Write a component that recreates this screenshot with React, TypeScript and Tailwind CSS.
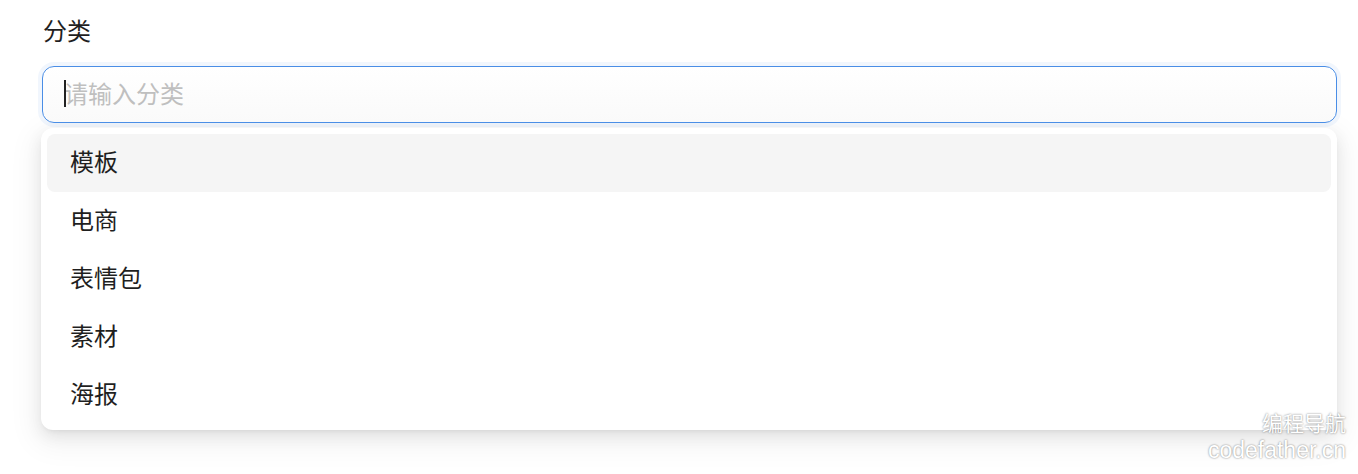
const items = ["模板", "电商", "表情包", "素材", "海报"];

export default function App() {
  return (
    <div className="relative w-[1358px] h-[474px] overflow-hidden bg-white font-['Noto_Sans_CJK_SC','Noto_Sans',sans-serif] text-[#1f1f1f]">
      <div className="flex flex-col pl-[41px] pr-[21px] pt-[14px]">
        {/* label */}
        <label className="pl-[2px] text-[24px] leading-[32px]">分类</label>
        {/* input */}
        <div className="relative mt-[20px] ml-[1px] h-[57px] rounded-[12px] border border-[#4a8ee6] bg-gradient-to-b from-white to-[#fafafa] shadow-[0_0_0_4px_rgba(74,142,230,0.08)]">
          <input
            type="text"
            placeholder="请输入分类"
            className="h-full w-full bg-transparent pb-[4px] pl-[21px] text-[24px] outline-none placeholder:text-[#bfbfbf]"
          />
          <span className="absolute left-[21px] top-[13px] h-[27px] w-[2px] bg-[#222]"></span>
        </div>
        {/* dropdown */}
        <div className="mt-[5px] flex flex-col rounded-[12px] bg-white p-[6px] shadow-[0_6px_16px_0_rgba(0,0,0,0.08),0_3px_6px_-4px_rgba(0,0,0,0.12),0_9px_28px_8px_rgba(0,0,0,0.05)]">
          {items.map((it, i) => (
            <div
              key={it}
              className={
                i === 0
                  ? "flex h-[58px] items-center rounded-[8px] bg-[#f5f5f5] pb-[5px] pl-[23px] text-[24px]"
                  : "flex h-[58px] items-center rounded-[8px] pb-[5px] pl-[23px] text-[24px]"
              }
            >
              {it}
            </div>
          ))}
        </div>
      </div>
      {/* watermark */}
      <div className="absolute right-[12px] bottom-[10px] flex flex-col items-end leading-[28px] text-white [text-shadow:0_0_2px_rgba(0,0,0,0.55)]">
        <span className="text-[21px]">编程导航</span>
        <span className="font-['Liberation_Sans',sans-serif] text-[23px]">codefather.cn</span>
      </div>
    </div>
  );
}
